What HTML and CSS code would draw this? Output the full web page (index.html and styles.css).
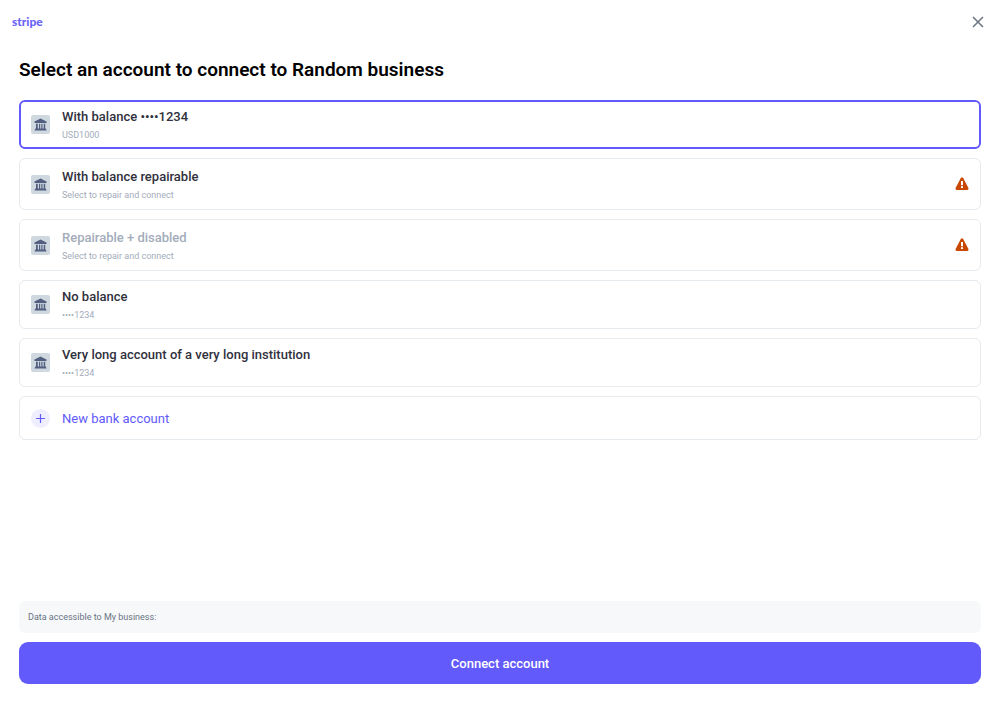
FILE: index.html
```html
<!DOCTYPE html>
<html lang="en">
<head>
<meta charset="utf-8">
<meta name="viewport" content="width=device-width, initial-scale=1">
<title>Select an account</title>
<link rel="stylesheet" href="styles.css">
</head>
<body>
<svg class="sprite" aria-hidden="true">
  <symbol id="bank" viewBox="0 0 19 19">
    <rect width="19" height="19" rx="2" fill="#cfd8df"/>
    <path fill="#525f80" d="M9.500 3.600 15.500 6.500V8h-12V6.500zM5 8.800h1.800v5H5zM8 8.800h1.200v5H8zM10.300 8.800h1.200v5h-1.200zM12.700 8.800h1.500v5h-1.500zM4.300 13.500h10.500l.8 2h-12.100z"/>
  </symbol>
  <symbol id="warning" viewBox="0 0 14 14">
    <path fill="#c84801" d="M5.700 1.300Q7-.7 8.300 1.300L13.300 10.800Q14 13 12 13H2Q0 13 .7 10.800z"/>
    <path fill="#fff" d="M6 4h2v4.200H6zM6 9.200h2v1.800H6z"/>
  </symbol>
</svg>
<div class="page">
  <header class="topbar">
    <span class="logo">stripe</span>
    <button class="close" type="button" aria-label="Close">
      <svg class="close-icon" viewBox="0 0 12 12"><path d="M1 1l10 10M11 1 1 11"/></svg>
    </button>
  </header>
  <main class="content">
    <h1 class="heading">Select an account to connect to Random business</h1>
    <div class="accounts">
      <button class="account selected" type="button" aria-pressed="true">
        <svg class="bank"><use href="#bank"/></svg>
        <span class="details"><span class="name">With balance ••••1234</span><span class="note">USD1000</span></span>
      </button>
      <button class="account repairable" type="button">
        <svg class="bank"><use href="#bank"/></svg>
        <span class="details"><span class="name">With balance repairable</span><span class="note">Select to repair and connect</span></span>
        <svg class="warning"><use href="#warning"/></svg>
      </button>
      <button class="account repairable" type="button" disabled>
        <svg class="bank"><use href="#bank"/></svg>
        <span class="details"><span class="name">Repairable + disabled</span><span class="note">Select to repair and connect</span></span>
        <svg class="warning"><use href="#warning"/></svg>
      </button>
      <button class="account" type="button">
        <svg class="bank"><use href="#bank"/></svg>
        <span class="details"><span class="name">No balance</span><span class="note">••••1234</span></span>
      </button>
      <button class="account" type="button">
        <svg class="bank"><use href="#bank"/></svg>
        <span class="details"><span class="name">Very long account of a very long institution</span><span class="note">••••1234</span></span>
      </button>
      <button class="account add" type="button">
        <svg class="bank" viewBox="0 0 19 19"><circle cx="9.500" cy="9.500" r="9.500" fill="#efeeff"/><path d="M9.500 5v9M5 9.500h9" stroke="#625afa" stroke-width="1.200"/></svg>
        <span class="add-label">New bank account</span>
      </button>
    </div>
  </main>
  <footer class="footer">
    <p class="access">Data accessible to My business:</p>
    <button class="connect" type="button">Connect account</button>
  </footer>
</div>
</body>
</html>
```
FILE: styles.css
```css
* {
  box-sizing: border-box;
}

body {
  margin: 0;
  background: #fff;
  color: #30313d;
  font-family: Roboto, sans-serif;
}

button {
  margin: 0;
  padding: 0;
  border: 0;
  background: none;
  color: inherit;
  font: inherit;
  cursor: pointer;
}

.sprite {
  display: none;
}

.page {
  display: flex;
  flex-direction: column;
  min-height: 100vh;
}

.topbar {
  display: flex;
  align-items: center;
  justify-content: space-between;
  height: 44px;
  padding: 0 16px 0 12px;
}

.logo {
  color: #6b63f6;
  font: 900 12px/18px Lato, sans-serif;
}

.close {
  display: flex;
}

.close-icon {
  width: 12px;
  height: 12px;
  fill: none;
  stroke: #6a7383;
  stroke-width: 1.5;
}

.content {
  flex: 1;
  padding: 12px 19px;
}

.heading {
  margin: 0 0 16px;
  color: #000;
  font-size: 19px;
  font-weight: 600;
  line-height: 28px;
}

.accounts {
  display: flex;
  flex-direction: column;
  gap: 9px;
}

.account {
  display: flex;
  align-items: center;
  gap: 12px;
  min-height: 49px;
  padding: 0 11px;
  border: 1px solid #e6ebef;
  border-radius: 6px;
  text-align: left;
}

.selected {
  padding: 0 10px;
  border: 2px solid #625afa;
}

.repairable {
  min-height: 52px;
}

.add {
  min-height: 44px;
}

.bank {
  flex: none;
  width: 19px;
  height: 19px;
}

.warning {
  flex: none;
  width: 14px;
  height: 14px;
}

.details {
  display: flex;
  flex: 1;
  flex-direction: column;
  gap: 4px;
  padding-top: 1px;
}

.name {
  font-size: 13px;
  font-weight: 500;
  line-height: 16px;
}

.note {
  color: #a3acba;
  font-size: 9px;
  line-height: 12px;
}

.account:disabled .name {
  color: #a3acba;
}

.add-label {
  color: #625afa;
  font-size: 13px;
}

.footer {
  display: flex;
  flex-direction: column;
  gap: 9px;
  padding: 0 19px 19px;
}

.access {
  margin: 0;
  padding: 10px 9px;
  border-radius: 6px;
  background: #f6f8fa;
  color: #6a7383;
  font-size: 9px;
  line-height: 12px;
}

.connect {
  min-height: 42px;
  border-radius: 9px;
  background: #625afa;
  color: #fff;
  font-size: 13px;
  font-weight: 500;
}
```
